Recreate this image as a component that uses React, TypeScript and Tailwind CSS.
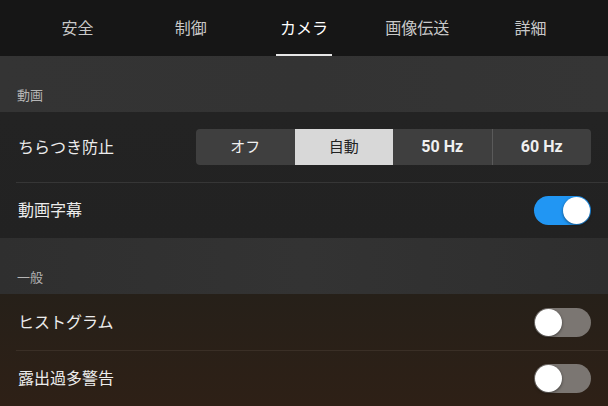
const tabs = ["安全", "制御", "カメラ", "画像伝送", "詳細"];
const flicker = ["オフ", "自動", "50 Hz", "60 Hz"];

const Toggle = ({ on }: { on: boolean }) => (
  <div
    className={`flex h-[29px] w-[57px] items-center rounded-full px-[1px] ${
      on ? "justify-end bg-[#2196f3]" : "justify-start bg-[#7b7672]"
    }`}
  >
    <div className="h-[27px] w-[27px] rounded-full bg-white shadow-[0_1px_3px_rgba(0,0,0,0.5)]" />
  </div>
);

const SectionLabel = ({ label, bg }: { label: string; bg: string }) => (
  <div className={`flex h-[56px] items-end pb-[8px] pl-[17px] text-[13px] text-[#b5b5b5] ${bg}`}>
    {label}
  </div>
);

const Row = ({ label, children, h }: { label: string; children: React.ReactNode; h: string }) => (
  <div className={`flex items-center justify-between pr-[17px] pl-[18px] ${h}`}>
    <span className="-mt-[3px] text-[16px] text-[#ececec]">{label}</span>
    {children}
  </div>
);

export default function App() {
  return (
    <div
      className="h-[406px] w-[608px] overflow-hidden bg-[#242424] text-white"
      style={{ fontFamily: '"Noto Sans CJK JP", "Noto Sans", sans-serif' }}
    >
      {/* Tabs */}
      <div className="flex h-[56px] bg-[#161616] px-[21px]">
        {tabs.map((t) => (
          <div key={t} className="relative flex flex-1 items-center justify-center pb-[3px]">
            <span className={`text-[16px] ${t === "カメラ" ? "text-white" : "text-[#c9c9c9]"}`}>{t}</span>
            {t === "カメラ" && (
              <div className="absolute bottom-[0px] left-1/2 h-[2px] w-[56px] -translate-x-1/2 bg-[#e6e6e6]" />
            )}
          </div>
        ))}
      </div>

      <SectionLabel label="動画" bg="bg-gradient-to-r from-[#343434] via-[#333333] to-[#353535]" />

      <div className="bg-gradient-to-b from-[#232323] to-[#222222]">
        <Row label="ちらつき防止" h="h-[70px]">
          <div className="flex h-[36px] w-[395px] overflow-hidden rounded-[4px] bg-[#3f3f3f]">
            {flicker.map((f, i) => (
              <div
                key={f}
                className={`flex flex-1 items-center justify-center ${
                  f === "自動" ? "bg-[#d8d8d8] text-[#222]" : "text-[#f0f0f0]"
                } ${f.includes("Hz") ? "text-[16px] font-bold" : "pb-[2px] text-[15px]"} ${
                  i === 3 ? "border-l border-[#5a5a5a]" : ""
                }`}
                style={f.includes("Hz") ? { fontFamily: '"Roboto", "Noto Sans", sans-serif' } : undefined}
              >
                {f}
              </div>
            ))}
          </div>
        </Row>
        <div className="ml-[16px] h-[1px] bg-[#363636]" />
        <Row label="動画字幕" h="h-[55px]">
          <Toggle on />
        </Row>
      </div>

      <SectionLabel label="一般" bg="bg-gradient-to-r from-[#2f2f2f] via-[#333333] to-[#2e2e2e]" />

      <div className="bg-gradient-to-b from-[#262019] to-[#2e2016]">
        <Row label="ヒストグラム" h="h-[56px]">
          <Toggle on={false} />
        </Row>
        <div className="ml-[16px] h-[1px] bg-[#3a2f26]" />
        <Row label="露出過多警告" h="h-[55px]">
          <Toggle on={false} />
        </Row>
      </div>
    </div>
  );
}
